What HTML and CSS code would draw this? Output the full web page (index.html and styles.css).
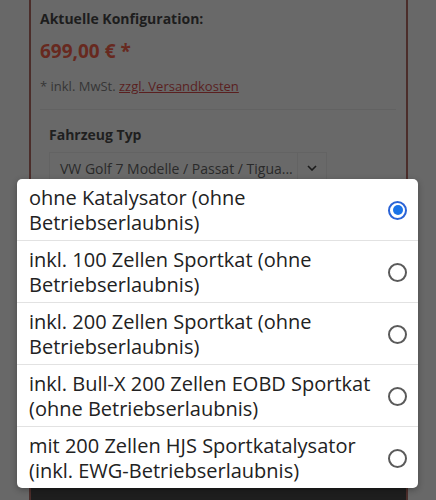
FILE: index.html
```html
<!DOCTYPE html>
<html lang="de">
<head>
<meta charset="utf-8">
<title>Konfiguration</title>
<link rel="stylesheet" href="styles.css">
</head>
<body>
<div class="page">
  <div class="card">
    <div class="card-body">
      <h2 class="cfg-title">Aktuelle Konfiguration:</h2>
      <div class="price">699,00 € *</div>
      <div class="tax">* inkl. MwSt. <a class="ship" href="#">zzgl. Versandkosten</a></div>
      <div class="divider"></div>
      <div class="field">
        <div class="field-label">Fahrzeug Typ</div>
        <div class="select">
          <span class="select-text">VW Golf 7 Modelle / Passat / Tigua...</span>
          <span class="select-arrow">
            <svg width="10" height="6" viewBox="0 0 10 6"><path d="M1 1l4 4 4-4" fill="none" stroke="#1c1c1c" stroke-width="1.6"/></svg>
          </span>
        </div>
      </div>
    </div>
    <div class="buy-bar"></div>
  </div>
</div>

<div class="picker">
  <div class="opt">
    <span class="opt-text">ohne Katalysator (ohne<br>Betriebserlaubnis)</span>
    <span class="radio checked"></span>
  </div>
  <div class="opt">
    <span class="opt-text">inkl. 100 Zellen Sportkat (ohne<br>Betriebserlaubnis)</span>
    <span class="radio"></span>
  </div>
  <div class="opt">
    <span class="opt-text">inkl. 200 Zellen Sportkat (ohne<br>Betriebserlaubnis)</span>
    <span class="radio"></span>
  </div>
  <div class="opt">
    <span class="opt-text">inkl. Bull-X 200 Zellen EOBD Sportkat<br>(ohne Betriebserlaubnis)</span>
    <span class="radio"></span>
  </div>
  <div class="opt">
    <span class="opt-text">mit 200 Zellen HJS Sportkatalysator<br>(inkl. EWG-Betriebserlaubnis)</span>
    <span class="radio"></span>
  </div>
</div>
</body>
</html>
```

FILE: styles.css
```css
html, body {
  margin: 0;
  padding: 0;
}
body {
  background: #686868;
  font-family: "Open Sans", "Noto Sans", sans-serif;
  width: 436px;
  height: 500px;
  overflow: hidden;
  position: relative;
}
.page {
  padding: 0 28px 0 29px;
}
.card {
  border-left: 2px solid #4b2d2a;
  border-right: 2px solid #4b2d2a;
  background: #696969;
  height: 520px;
}
.card-body {
  padding: 9px 10px 0 9px;
}
.cfg-title {
  margin: 0;
  font-size: 14px;
  line-height: 20px;
  font-weight: 700;
  color: #1d1d1d;
}
.price {
  margin-top: 8px;
  font-size: 19px;
  line-height: 28px;
  font-weight: 700;
  color: #67291f;
}
.tax {
  margin-top: 12px;
  font-size: 13px;
  line-height: 18px;
  color: #363636;
}
.ship {
  color: #5a1f1f;
  text-decoration: underline;
}
.divider {
  margin-top: 14px;
  height: 1px;
  background: #626262;
}
.field {
  padding-left: 9px;
  margin-top: 15px;
}
.field-label {
  font-size: 14px;
  line-height: 20px;
  font-weight: 700;
  color: #1f1f1f;
}
.select {
  margin-top: 7px;
  width: 278px;
  height: 32px;
  border: 1px solid #636363;
  display: flex;
  align-items: center;
  box-sizing: border-box;
}
.select-text {
  flex: 1;
  padding-left: 10px;
  font-size: 14px;
  color: #2a2a2a;
  white-space: nowrap;
  overflow: hidden;
}
.select-arrow {
  width: 28px;
  height: 100%;
  border-left: 1px solid #636363;
  display: flex;
  align-items: center;
  justify-content: center;
}
.buy-bar {
  margin-top: 300px;
  height: 30px;
  background: #1e1e1e;
}
.picker {
  position: absolute;
  left: 17px;
  top: 179px;
  width: 401px;
  background: #ffffff;
  border-radius: 5px;
  box-shadow: 0 2px 6px rgba(0, 0, 0, 0.3);
  overflow: hidden;
}
.opt {
  display: flex;
  align-items: center;
  padding: 6px 11px 5px 12px;
  min-height: 50px;
  border-top: 1px solid #e2e2e2;
}
.opt:first-child {
  border-top: none;
}
.opt-text {
  flex: 1;
  font-size: 20px;
  line-height: 25px;
  color: #222222;
  white-space: nowrap;
}
.radio {
  width: 19px;
  height: 19px;
  box-sizing: border-box;
  border: 2px solid #5a5a5a;
  border-radius: 50%;
  flex: none;
  position: relative;
}
.radio.checked {
  border-color: #2a63d6;
}
.radio.checked::after {
  content: "";
  position: absolute;
  left: 2.5px;
  top: 2.5px;
  width: 10px;
  height: 10px;
  border-radius: 50%;
  background: #1a73e8;
}
```
